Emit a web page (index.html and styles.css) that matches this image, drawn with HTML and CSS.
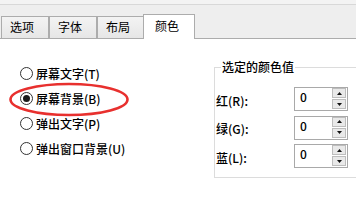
FILE: index.html
```html
<!DOCTYPE html>
<html lang="zh-CN">
<head>
<meta charset="utf-8">
<title>颜色</title>
<link rel="stylesheet" href="styles.css">
</head>
<body>
<div class="window">
  <div class="topbar"></div>
  <div class="tabstrip">
    <div class="tab t1">选项</div>
    <div class="tab t2">字体</div>
    <div class="tab t3">布局</div>
    <div class="tab active">颜色</div>
  </div>
  <div class="content">
    <div class="radios">
      <label class="radio"><span class="dot"></span>屏幕文字(T)</label>
      <label class="radio checked"><span class="dot"></span>屏幕背景(B)</label>
      <label class="radio"><span class="dot"></span>弹出文字(P)</label>
      <label class="radio"><span class="dot"></span>弹出窗口背景(U)</label>
      <svg class="mark" width="128" height="40" viewBox="0 0 128 40"><ellipse cx="63" cy="19.5" rx="58.5" ry="15.5" fill="none" stroke="#e8302e" stroke-width="2.6"/></svg>
    </div>
    <fieldset class="group">
      <legend>选定的颜色值</legend>
      <div class="field">
        <span class="lbl">红(R):</span>
        <div class="spin"><span class="val">0</span><div class="btns"><span class="btn"><svg width="5" height="3" viewBox="0 0 5 3"><polygon points="2.5,0 5,3 0,3" fill="#111"/></svg></span><span class="btn"><svg width="5" height="3" viewBox="0 0 5 3"><polygon points="0,0 5,0 2.5,3" fill="#111"/></svg></span></div></div>
      </div>
      <div class="field">
        <span class="lbl">绿(G):</span>
        <div class="spin"><span class="val">0</span><div class="btns"><span class="btn"><svg width="5" height="3" viewBox="0 0 5 3"><polygon points="2.5,0 5,3 0,3" fill="#111"/></svg></span><span class="btn"><svg width="5" height="3" viewBox="0 0 5 3"><polygon points="0,0 5,0 2.5,3" fill="#111"/></svg></span></div></div>
      </div>
      <div class="field">
        <span class="lbl">蓝(L):</span>
        <div class="spin"><span class="val">0</span><div class="btns"><span class="btn"><svg width="5" height="3" viewBox="0 0 5 3"><polygon points="2.5,0 5,3 0,3" fill="#111"/></svg></span><span class="btn"><svg width="5" height="3" viewBox="0 0 5 3"><polygon points="0,0 5,0 2.5,3" fill="#111"/></svg></span></div></div>
      </div>
    </fieldset>
  </div>
</div>
</body>
</html>
```
FILE: styles.css
```css
html, body {
  margin: 0;
  padding: 0;
  width: 356px;
  height: 210px;
  overflow: hidden;
  background: #ffffff;
}
.window {
  font-family: "Noto Sans CJK SC", "Noto Sans", sans-serif;
  font-size: 12px;
  color: #000;
  width: 356px;
  height: 210px;
  overflow: hidden;
}
.topbar {
  height: 4px;
  background: #f3f3f3;
  border-bottom: 1px solid #d8d8d8;
}
.tabstrip {
  height: 33px;
  background: #eeeeee;
  border-bottom: 1px solid #acacac;
  display: flex;
  align-items: flex-end;
  padding-left: 1px;
}
.tab {
  box-sizing: border-box;
  height: 22px;
  border: 1px solid #acacac;
  border-bottom: none;
  background: linear-gradient(#f3f3f3, #e6e6e6);
  padding-left: 8px;
  line-height: 20px;
  white-space: nowrap;
}
.t1 { width: 48px; }
.t2 { width: 48px; }
.t3 { width: 47px; }
.tab.active {
  width: 52px;
  height: 25px;
  margin-left: -1px;
  margin-bottom: -1px;
  background: #ffffff;
  padding-left: 11px;
  line-height: 21px;
}
.content {
  display: flex;
  align-items: flex-start;
  padding: 22px 0 0 20px;
}
.radios {
  position: relative;
  flex: 0 0 194px;
  width: 194px;
  display: flex;
  flex-direction: column;
}
.radio {
  display: flex;
  align-items: center;
  height: 25px;
  line-height: 16px;
  white-space: nowrap;
  font-weight: 500;
}
.dot {
  box-sizing: border-box;
  width: 13px;
  height: 13px;
  border: 1px solid #333333;
  border-radius: 50%;
  background: #fff;
  margin-right: 3px;
  display: flex;
  align-items: center;
  justify-content: center;
}
.radio.checked .dot::after {
  content: "";
  width: 7px;
  height: 7px;
  border-radius: 50%;
  background: #1b1b1b;
}
.mark {
  position: absolute;
  left: -14px;
  top: 19px;
}
.group {
  flex: 0 0 auto;
  margin: -2px 0 0 0;
  padding: 12px 0 9px 1px;
  border: 1px solid #dcdcdc;
  border-right: none;
  width: 180px;
  min-width: 0;
  display: flex;
  flex-direction: column;
  gap: 4.5px;
}
.group legend {
  padding: 0 1px;
  margin-left: 5px;
  line-height: 16px;
  font-weight: 500;
}
.field {
  display: flex;
  align-items: center;
  height: 24px;
}
.lbl {
  width: 78px;
  line-height: 16px;
  padding-top: 3px;
  font-weight: 500;
}
.spin {
  box-sizing: border-box;
  width: 54px;
  height: 24px;
  border: 1px solid #a9a9a9;
  display: flex;
  justify-content: space-between;
  background: #fff;
}
.val {
  padding-left: 5px;
  line-height: 16px;
  padding-top: 1px;
  font-weight: 500;
}
.btns {
  display: flex;
  flex-direction: column;
  gap: 1px;
  padding: 0 1px 0 0;
}
.btn {
  box-sizing: border-box;
  width: 14px;
  height: 10px;
  border: 1px solid #bdbdbd;
  background: #e9e9e9;
  display: flex;
  align-items: center;
  justify-content: center;
}
.btn svg { display: block; }
```
